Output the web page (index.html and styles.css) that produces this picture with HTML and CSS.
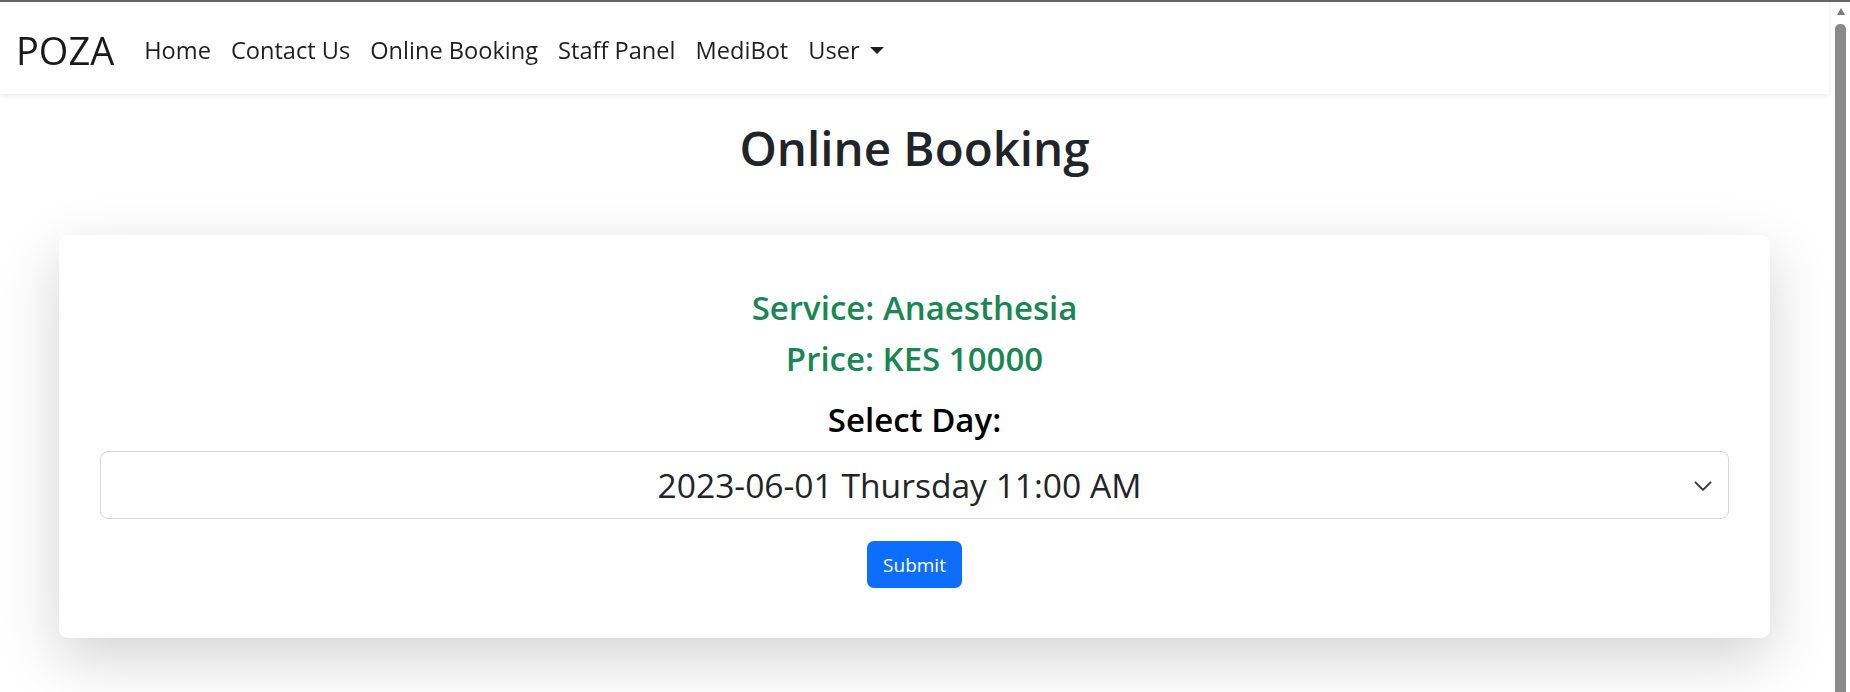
FILE: index.html
```html
<!DOCTYPE html>
<html lang="en">
<head>
<meta charset="utf-8">
<title>Online Booking</title>
<link rel="stylesheet" href="styles.css">
</head>
<body>
<div class="window-line"></div>
<div class="page">
  <nav class="navbar">
    <a class="brand" href="#">POZA</a>
    <ul class="nav">
      <li><a class="nav-link" href="#">Home</a></li>
      <li><a class="nav-link" href="#">Contact Us</a></li>
      <li><a class="nav-link" href="#">Online Booking</a></li>
      <li><a class="nav-link" href="#">Staff Panel</a></li>
      <li><a class="nav-link" href="#">MediBot</a></li>
      <li><a class="nav-link dropdown" href="#">User<span class="caret"></span></a></li>
    </ul>
  </nav>
  <main class="main">
    <h1 class="title">Online Booking</h1>
    <section class="card">
      <h3 class="info">Service: Anaesthesia</h3>
      <h3 class="info">Price: KES 10000</h3>
      <label class="label">Select Day:</label>
      <div class="select">
        <span class="select-text">2023-06-01 Thursday 11:00 AM</span>
        <svg class="chevron" width="20" height="15" viewBox="0 0 16 12" aria-hidden="true"><path d="M2 3.5l6 6 6-6" fill="none" stroke="#343a40" stroke-width="1.6" stroke-linecap="round" stroke-linejoin="round"/></svg>
      </div>
      <button class="btn" type="button">Submit</button>
    </section>
  </main>
</div>
<div class="scrollbar">
  <span class="scroll-arrow"></span>
  <span class="scroll-thumb"></span>
</div>
</body>
</html>
```
FILE: styles.css
```css
html, body {
  margin: 0;
  padding: 0;
  background: #fff;
  overflow: hidden;
  height: 692px;
}
body {
  font-family: "Open Sans", "Noto Sans", Arial, sans-serif;
  color: #212529;
}
.window-line {
  height: 2px;
  background: #666;
}
.page {
  width: 1829px;
}
.navbar {
  display: flex;
  align-items: center;
  height: 88px;
  padding: 4px 15px 0 16px;
  background: #fff;
  box-shadow: 0 2px 5px rgba(0, 0, 0, 0.08);
  position: relative;
  z-index: 1;
}
.brand {
  font-size: 38px;
  line-height: 60px;
  color: #1a1a1a;
  text-decoration: none;
  margin-right: 20px;
}
.nav {
  display: flex;
  list-style: none;
  margin: 0;
  padding: 0;
}
.nav-link {
  display: flex;
  align-items: center;
  padding: 10px 10px;
  font-size: 23.6px;
  line-height: 37px;
  color: #1f1f1f;
  text-decoration: none;
}
.caret {
  display: inline-block;
  margin-left: 10px;
  width: 0;
  height: 0;
  border-top: 7px solid #1f1f1f;
  border-left: 7px solid transparent;
  border-right: 7px solid transparent;
}
.main {
  padding: 25px 59px 0 59px;
}
.title {
  margin: 0 0 59px;
  text-align: center;
  font-size: 47.5px;
  line-height: 57px;
  font-weight: 600;
  color: #212529;
}
.card {
  display: flex;
  flex-direction: column;
  align-items: center;
  padding: 53px 41px 50px;
  background: #fff;
  border-radius: 9px;
  box-shadow: 0 20px 60px rgba(0, 0, 0, 0.175);
}
.info {
  margin: 0 0 11px;
  font-size: 33px;
  line-height: 40px;
  font-weight: 600;
  color: #198754;
}
.info + .info {
  margin-bottom: 21px;
}
.label {
  font-size: 33px;
  line-height: 40px;
  font-weight: 600;
  color: #000;
  margin-bottom: 11px;
}
.select {
  box-sizing: border-box;
  align-self: stretch;
  display: flex;
  align-items: center;
  height: 68px;
  padding: 0 15px;
  border: 1px solid #d3d6da;
  border-radius: 8px;
  background: #fff;
}
.select-text {
  flex: 1;
  text-align: center;
  font-size: 33.6px;
  color: #212529;
}
.chevron {
  margin-left: 10px;
  flex: none;
}
.btn {
  margin-top: 22px;
  width: 95px;
  height: 47px;
  border: 0;
  border-radius: 7px;
  background: #0d6efd;
  color: #fff;
  font-family: "Open Sans", "Noto Sans", Arial, sans-serif;
  font-size: 19px;
  padding: 0;
}
.scrollbar {
  position: fixed;
  top: 2px;
  right: 0;
  width: 21px;
  height: 690px;
  background: #fff;
}
.scroll-arrow {
  position: absolute;
  top: 6px;
  left: 8px;
  width: 0;
  height: 0;
  border-bottom: 7px solid #7a7a7a;
  border-left: 4.5px solid transparent;
  border-right: 4.5px solid transparent;
}
.scroll-thumb {
  position: absolute;
  top: 22px;
  left: 6px;
  width: 11px;
  bottom: 0;
  background: #8a8a8a;
  border-radius: 5px 5px 0 0;
}
```
